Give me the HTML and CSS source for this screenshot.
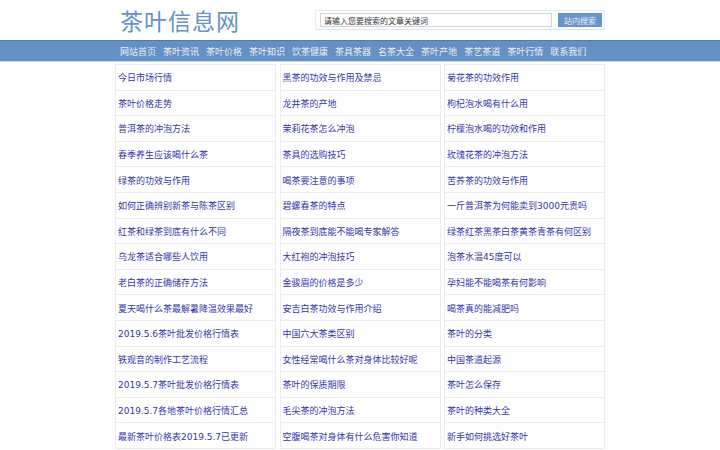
FILE: index.html
```html
<!DOCTYPE html>
<html lang="zh-CN">
<head>
  <meta charset="UTF-8" />
  <title>茶叶信息网</title>
  <link rel="stylesheet" href="styles.css">
</head>
<body>

<div class="header">
  <div class="logo">茶叶信息网</div>
  <form class="search">
    <input type="text" class="kw" value="请输入您要搜索的文章关键词">
    <button type="button" class="btn">站内搜索</button>
  </form>
</div>

<div class="nav">
  <div class="nav-inner">
    <a href="#">网站首页</a>
    <a href="#">茶叶资讯</a>
    <a href="#">茶叶价格</a>
    <a href="#">茶叶知识</a>
    <a href="#">饮茶健康</a>
    <a href="#">茶具茶器</a>
    <a href="#">名茶大全</a>
    <a href="#">茶叶产地</a>
    <a href="#">茶艺茶道</a>
    <a href="#">茶叶行情</a>
    <a href="#">联系我们</a>
  </div>
</div>

<div class="list">
  <ul>
    <li><a href="#">今日市场行情</a></li>
    <li><a href="#">茶叶价格走势</a></li>
    <li><a href="#">普洱茶的冲泡方法</a></li>
    <li><a href="#">春季养生应该喝什么茶</a></li>
    <li><a href="#">绿茶的功效与作用</a></li>
    <li><a href="#">如何正确辨别新茶与陈茶区别</a></li>
    <li><a href="#">红茶和绿茶到底有什么不同</a></li>
    <li><a href="#">乌龙茶适合哪些人饮用</a></li>
    <li><a href="#">老白茶的正确储存方法</a></li>
    <li><a href="#">夏天喝什么茶最解暑降温效果最好</a></li>
    <li><a href="#">2019.5.6茶叶批发价格行情表</a></li>
    <li><a href="#">铁观音的制作工艺流程</a></li>
    <li><a href="#">2019.5.7茶叶批发价格行情表</a></li>
    <li><a href="#">2019.5.7各地茶叶价格行情汇总</a></li>
    <li><a href="#">最新茶叶价格表2019.5.7已更新</a></li>
  </ul>
  <ul>
    <li><a href="#">黑茶的功效与作用及禁忌</a></li>
    <li><a href="#">龙井茶的产地</a></li>
    <li><a href="#">茉莉花茶怎么冲泡</a></li>
    <li><a href="#">茶具的选购技巧</a></li>
    <li><a href="#">喝茶要注意的事项</a></li>
    <li><a href="#">碧螺春茶的特点</a></li>
    <li><a href="#">隔夜茶到底能不能喝专家解答</a></li>
    <li><a href="#">大红袍的冲泡技巧</a></li>
    <li><a href="#">金骏眉的价格是多少</a></li>
    <li><a href="#">安吉白茶功效与作用介绍</a></li>
    <li><a href="#">中国六大茶类区别</a></li>
    <li><a href="#">女性经常喝什么茶对身体比较好呢</a></li>
    <li><a href="#">茶叶的保质期限</a></li>
    <li><a href="#">毛尖茶的冲泡方法</a></li>
    <li><a href="#">空腹喝茶对身体有什么危害你知道</a></li>
  </ul>
  <ul>
    <li><a href="#">菊花茶的功效作用</a></li>
    <li><a href="#">枸杞泡水喝有什么用</a></li>
    <li><a href="#">柠檬泡水喝的功效和作用</a></li>
    <li><a href="#">玫瑰花茶的冲泡方法</a></li>
    <li><a href="#">苦荞茶的功效与作用</a></li>
    <li><a href="#">一斤普洱茶为何能卖到3000元贵吗</a></li>
    <li><a href="#">绿茶红茶黑茶白茶黄茶青茶有何区别</a></li>
    <li><a href="#">泡茶水温45度可以</a></li>
    <li><a href="#">孕妇能不能喝茶有何影响</a></li>
    <li><a href="#">喝茶真的能减肥吗</a></li>
    <li><a href="#">茶叶的分类</a></li>
    <li><a href="#">中国茶道起源</a></li>
    <li><a href="#">茶叶怎么保存</a></li>
    <li><a href="#">茶叶的种类大全</a></li>
    <li><a href="#">新手如何挑选好茶叶</a></li>
  </ul>
</div>

</body>
</html>
```

FILE: styles.css
```css
body {
  margin: 0;
  background: #fff;
  font-family: "DejaVu Sans", "Noto Sans CJK SC", sans-serif;
  font-size: 9px;
  color: #333;
}
a {
  text-decoration: none;
}
.header {
  width: 490px;
  height: 40px;
  margin: 0 auto;
  display: flex;
  align-items: center;
  justify-content: space-between;
}
.logo {
  padding-left: 5px;
  font-size: 23px;
  color: #6592c9;
  letter-spacing: 1px;
}
.search {
  display: flex;
  align-items: center;
  gap: 6px;
  margin: 0;
  padding: 2px 2px 2px 4px;
  border: 1px solid #e3ebf3;
  border-bottom-color: #d6e6f4;
  background: #fbfdff;
}
.kw {
  width: 232px;
  height: 14px;
  padding: 0 3px;
  border: 1px solid #d4d4d4;
  font-family: inherit;
  font-size: 8px;
  color: #333;
  box-sizing: border-box;
}
.btn {
  width: 44px;
  height: 14px;
  padding: 0;
  border: none;
  background: #6a95c8;
  color: #e6eef8;
  font-family: inherit;
  font-size: 8px;
  cursor: pointer;
}
.nav {
  height: 22px;
  background: #6590c4;
  border-top: 1px solid #4f7db5;
  border-bottom: 1px solid #c6dbee;
  box-sizing: border-box;
}
.nav-inner {
  width: 490px;
  height: 100%;
  margin: 0 auto;
  padding-left: 5px;
  box-sizing: border-box;
  display: flex;
  align-items: center;
  gap: 7px;
}
.nav a {
  color: #e8eff8;
  font-size: 9px;
}
.list {
  width: 490px;
  margin: 2px auto 0;
  display: grid;
  grid-template-columns: repeat(3, 1fr);
  gap: 3.5px;
}
.list ul {
  margin: 0;
  padding: 0;
  list-style: none;
  border: 1px solid #ececec;
  border-bottom: none;
}
.list li {
  height: 25.6px;
  box-sizing: border-box;
  border-bottom: 1px solid #ececec;
  padding: 1px 0 0 2px;
  display: flex;
  align-items: center;
  white-space: nowrap;
  overflow: hidden;
}
.list li a {
  color: #3535a8;
}
```
